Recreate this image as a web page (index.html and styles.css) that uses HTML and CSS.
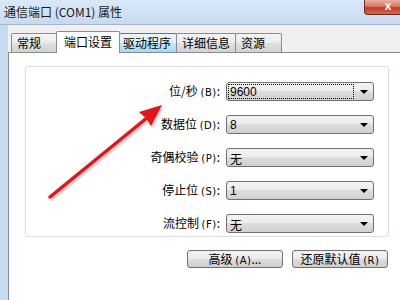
FILE: index.html
```html
<!DOCTYPE html>
<html lang="zh-CN">
<head>
  <meta charset="UTF-8">
  <title>通信端口 (COM1) 属性</title>
  <link rel="stylesheet" href="styles.css">
</head>
<body>
  <div class="window">
    <div class="titlebar">
      <span class="title">通信端口 (COM1) 属性</span>
      <div class="close">x</div>
    </div>

    <div class="frame">
      <div class="tabs">
        <div class="tab">常规</div>
        <div class="tab active">端口设置</div>
        <div class="tab hover">驱动程序</div>
        <div class="tab">详细信息</div>
        <div class="tab">资源</div>
      </div>

      <div class="page">
        <div class="group">
          <div class="row">
            <label>位/秒 <span class="key">(B)</span>:</label>
            <div class="combo"><span class="value focus">9600</span><span class="drop"></span></div>
          </div>
          <div class="row">
            <label>数据位 <span class="key">(D)</span>:</label>
            <div class="combo"><span class="value">8</span><span class="drop"></span></div>
          </div>
          <div class="row">
            <label>奇偶校验 <span class="key">(P)</span>:</label>
            <div class="combo"><span class="value cjk">无</span><span class="drop"></span></div>
          </div>
          <div class="row">
            <label>停止位 <span class="key">(S)</span>:</label>
            <div class="combo"><span class="value">1</span><span class="drop"></span></div>
          </div>
          <div class="row">
            <label>流控制 <span class="key">(F)</span>:</label>
            <div class="combo"><span class="value cjk">无</span><span class="drop"></span></div>
          </div>
        </div>

        <div class="buttons">
          <button>高级 <span class="key">(A)</span>...</button>
          <button>还原默认值 <span class="key">(R)</span></button>
        </div>
      </div>
    </div>

    <!-- red annotation arrow drawn over the dialog -->
    <svg class="arrow" width="400" height="300" viewBox="0 0 400 300">
      <defs>
        <filter id="soft" x="-10%" y="-10%" width="120%" height="120%">
          <feGaussianBlur stdDeviation="1"/>
        </filter>
      </defs>
      <g transform="translate(1.5 2)" fill="#8a8a8a" stroke="#8a8a8a" opacity="0.55" filter="url(#soft)">
        <line x1="50" y1="197" x2="148" y2="117" stroke-width="3.5" stroke-linecap="round"/>
        <polygon points="162,105 139,112 146,118 151,126" stroke="none"/>
      </g>
      <line x1="50" y1="197" x2="148" y2="117" stroke="#e3141b" stroke-width="3.5" stroke-linecap="round"/>
      <polygon points="162,105 139,112 146,118 151,126" fill="#e3141b"/>
    </svg>
  </div>
</body>
</html>
```

FILE: styles.css
```css
* { box-sizing: border-box; margin: 0; padding: 0; }
body { width: 400px; height: 300px; overflow: hidden; background: #fff; color: #000;
  font-family: "Noto Sans CJK SC", "Liberation Sans", sans-serif; font-size: 12px; }

.window { position: relative; height: 300px; display: flex; flex-direction: column; }

/* title bar */
.titlebar { height: 25px; display: flex; align-items: flex-start; overflow: hidden;
  background: linear-gradient(#dae9f8, #c6daf0); border-bottom: 1px solid #a3b5ca; }
.title { padding: 4px 0 0 4px; line-height: 16px; color: #1a1a1a; }
.close { margin-left: auto; margin-right: -12px; width: 48px; height: 15px;
  border: 1px solid #6e2a20; border-top: none; border-radius: 0 0 4px 4px;
  background: linear-gradient(#eab0a2, #d67662 45%, #c23c26 55%, #d2654e);
  color: #fff; font: bold 12px/13px "Liberation Sans", sans-serif; text-align: center; }

/* window body */
.frame { flex: 1; display: flex; flex-direction: column; background: #f0f0f0;
  border-left: 8px solid #c6daf0; }

.tabs { height: 27px; display: flex; align-items: flex-end; padding-left: 3px; }
.tab { height: 19px; min-width: 47px; padding: 0 5px; margin-left: -1px; line-height: 18px;
  border: 1px solid #898c95; border-bottom: none; border-radius: 2px 2px 0 0;
  background: linear-gradient(#f4f4f4, #ececec 50%, #dfdfdf 50%, #d2d2d2); white-space: nowrap; }
.tab:first-child { margin-left: 0; }
.tab.active { position: relative; z-index: 1; height: 22px; padding: 0 7px; margin: 0 -2px -1px -2px;
  line-height: 20px; background: #fff; }
.tab.hover { background: linear-gradient(#eaf6fd, #d9f0fc 50%, #bee6fd 50%, #a7d9f5); border-color: #3c7fb1; }

.page { flex: 1; background: #fff; border-top: 1px solid #898c95; border-left: 1px solid #7c8ea4;
  padding: 13px 0 0 16px; }

.group { width: 364px; height: 171px; border: 1px solid #d5dfe5; border-radius: 3px;
  padding: 14px 14px 0 0; display: flex; flex-direction: column; gap: 12px; }
.row { display: grid; grid-template-columns: 1fr 148px; column-gap: 6px; align-items: center; }
.row label { text-align: right; line-height: 19px; white-space: nowrap; }
.key { font-family: "DejaVu Sans", sans-serif; font-size: 10px; letter-spacing: 0.5px; }

.combo { height: 19px; display: flex; border: 1px solid #707070; border-radius: 3px;
  background: linear-gradient(#f3f3f3, #ebebeb 50%, #dddddd 50%, #d0d0d0); }
.value { flex: 1; margin: 1px; padding-left: 1px; line-height: 15px; border: 1px solid transparent;
  font-family: "Liberation Sans", sans-serif; font-size: 12px; }
.value.cjk { font-family: "Noto Sans CJK SC", sans-serif; }
.value.focus { border: 1px dotted #000; }
.drop { width: 18px; display: flex; align-items: center; justify-content: center; }
.drop::after { content: ""; border-left: 4px solid transparent; border-right: 4px solid transparent;
  border-top: 4px solid #000; }

.buttons { width: 364px; margin-top: 13px; padding-right: 1px; display: flex; justify-content: flex-end; gap: 9px; }
.buttons button { width: 96px; height: 18px; border: 1px solid #707070; border-radius: 3px;
  background: linear-gradient(#f2f2f2, #ebebeb 50%, #dddddd 50%, #cfcfcf);
  font-family: "Noto Sans CJK SC", sans-serif; font-size: 12px; line-height: 16px; color: #000; }

.arrow { position: absolute; left: 0; top: 0; pointer-events: none; }
```
